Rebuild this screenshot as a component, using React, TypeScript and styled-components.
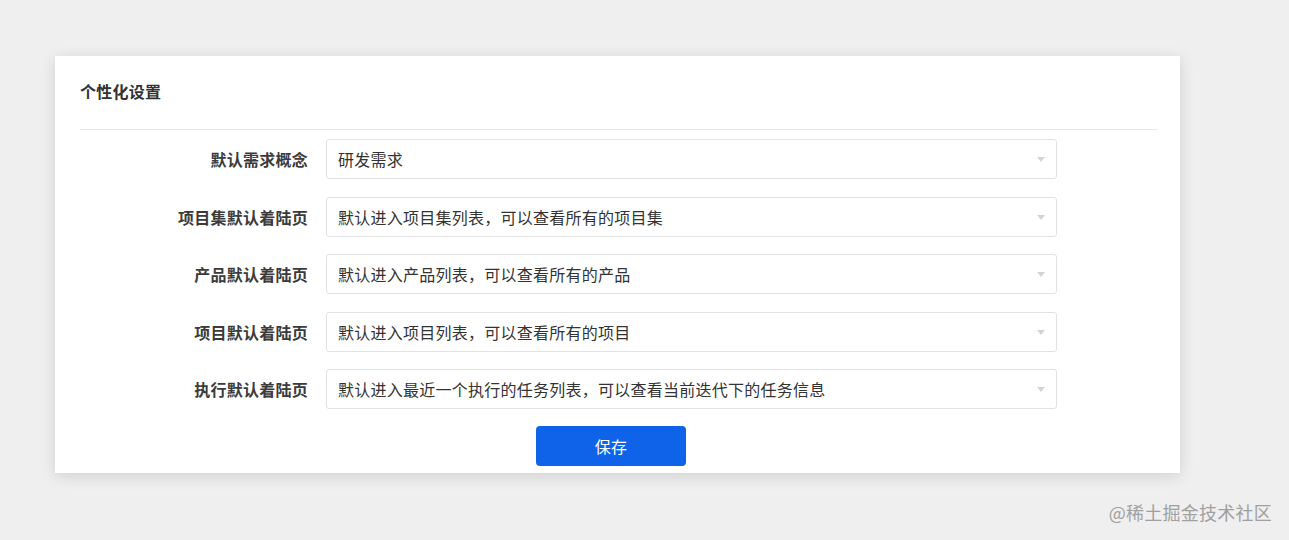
import React from 'react';
import styled, { createGlobalStyle } from 'styled-components';

const GlobalStyle = createGlobalStyle`
  html, body {
    margin: 0;
    padding: 0;
    background: #efefef;
    font-family: "Noto Sans CJK SC", "Noto Sans", "Liberation Sans", sans-serif;
    letter-spacing: 0.25px;
  }
`;

const Page = styled.div`
  position: relative;
  width: 1289px;
  height: 540px;
  padding: 56px 0 0 55px;
  box-sizing: border-box;
`;

const Card = styled.section`
  width: 1125px;
  height: 417px;
  box-sizing: border-box;
  background: #fff;
  padding: 0 23px 0 25px;
  box-shadow: 0 3px 14px rgba(0, 0, 0, 0.13);
  display: flex;
  flex-direction: column;
`;

const Header = styled.header`
  height: 74px;
  display: flex;
  align-items: center;
  border-bottom: 1px solid #e8e8e8;
  padding-bottom: 4px;
  box-sizing: border-box;
`;

const Title = styled.h2`
  margin: 0;
  font-size: 16px;
  line-height: 20px;
  font-weight: 700;
  color: #333;
`;

const Form = styled.div`
  display: flex;
  flex-direction: column;
  gap: 17.5px;
  padding-top: 9px;
`;

const Row = styled.div`
  display: flex;
  align-items: center;
  gap: 18px;
`;

const Label = styled.label`
  width: 228px;
  text-align: right;
  font-size: 16px;
  line-height: 20px;
  font-weight: 700;
  color: #3b3b3b;
`;

const Select = styled.div`
  position: relative;
  width: 731px;
  height: 40px;
  box-sizing: border-box;
  border: 1px solid #e2e2e2;
  border-radius: 3px;
  padding: 0 30px 0 11px;
  display: flex;
  align-items: center;
  font-size: 16px;
  color: #333;
`;

const Caret = styled.span`
  position: absolute;
  right: 11px;
  top: 50%;
  margin-top: -2px;
  width: 0;
  height: 0;
  border-left: 4px solid transparent;
  border-right: 4px solid transparent;
  border-top: 5px solid #d4d4d4;
`;

const Footer = styled.div`
  padding: 17px 0 0 456px;
`;

const SaveButton = styled.button`
  width: 150px;
  height: 40px;
  border: none;
  border-radius: 4px;
  background: #0e63e9;
  color: #fff;
  font-family: inherit;
  font-size: 16px;
  letter-spacing: inherit;
  cursor: pointer;
`;

const Watermark = styled.div`
  position: absolute;
  right: 17px;
  bottom: 17px;
  font-size: 18px;
  line-height: 22px;
  color: #a0a0a0;
`;

const rows = [
  { label: '默认需求概念', value: '研发需求' },
  { label: '项目集默认着陆页', value: '默认进入项目集列表，可以查看所有的项目集' },
  { label: '产品默认着陆页', value: '默认进入产品列表，可以查看所有的产品' },
  { label: '项目默认着陆页', value: '默认进入项目列表，可以查看所有的项目' },
  { label: '执行默认着陆页', value: '默认进入最近一个执行的任务列表，可以查看当前迭代下的任务信息' },
];

export default function App() {
  return (
    <>
      <GlobalStyle />
      <Page>
        <Card>
          <Header>
            <Title>个性化设置</Title>
          </Header>
          <Form>
            {rows.map((r) => (
              <Row key={r.label}>
                <Label>{r.label}</Label>
                <Select>
                  {r.value}
                  <Caret />
                </Select>
              </Row>
            ))}
          </Form>
          <Footer>
            <SaveButton>保存</SaveButton>
          </Footer>
        </Card>
        <Watermark>@稀土掘金技术社区</Watermark>
      </Page>
    </>
  );
}
